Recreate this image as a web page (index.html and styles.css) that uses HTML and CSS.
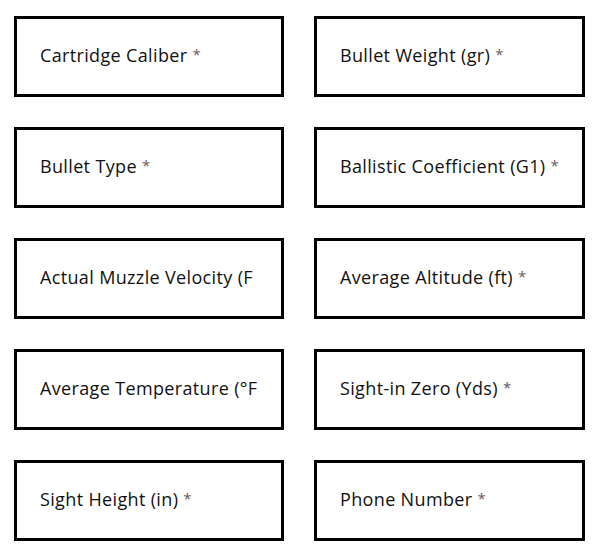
FILE: index.html
```html
<!DOCTYPE html>
<html lang="en">
<head>
    <meta charset="UTF-8">
    <meta name="viewport" content="width=device-width, initial-scale=1.0">
    <title>Ballistics Form</title>
    <link rel="stylesheet" href="styles.css">
</head>
<body>

    <form class="ballistic-form">
        <div class="field"><span class="label">Cartridge Caliber <span class="req">*</span></span></div>
        <div class="field"><span class="label">Bullet Weight (gr) <span class="req">*</span></span></div>
        <div class="field"><span class="label">Bullet Type <span class="req">*</span></span></div>
        <div class="field"><span class="label">Ballistic Coefficient (G1) <span class="req">*</span></span></div>
        <div class="field"><span class="label">Actual Muzzle Velocity (F</span></div>
        <div class="field"><span class="label">Average Altitude (ft) <span class="req">*</span></span></div>
        <div class="field"><span class="label">Average Temperature (°F</span></div>
        <div class="field"><span class="label">Sight-in Zero (Yds) <span class="req">*</span></span></div>
        <div class="field"><span class="label">Sight Height (in) <span class="req">*</span></span></div>
        <div class="field"><span class="label">Phone Number <span class="req">*</span></span></div>
    </form>

</body>
</html>
```

FILE: styles.css
```css
body {
    margin: 0;
    background-color: white;
    font-family: "Open Sans", Arial, sans-serif;
}
.ballistic-form {
    display: grid;
    grid-template-columns: 270px 271px;
    column-gap: 30px;
    row-gap: 30px;
    padding: 16px 0 0 14px;
}
.field {
    height: 81px;
    box-sizing: border-box;
    border: 3px solid black;
    padding: 0 20px 4px 23px;
    display: flex;
    align-items: center;
    overflow: hidden;
}
.label {
    display: block;
    width: 100%;
    white-space: nowrap;
    font-size: 18px;
    letter-spacing: 0.35px;
    color: #111;
}
.req {
    color: #6b5a58;
    font-size: 15px;
    vertical-align: 2px;
}
```
